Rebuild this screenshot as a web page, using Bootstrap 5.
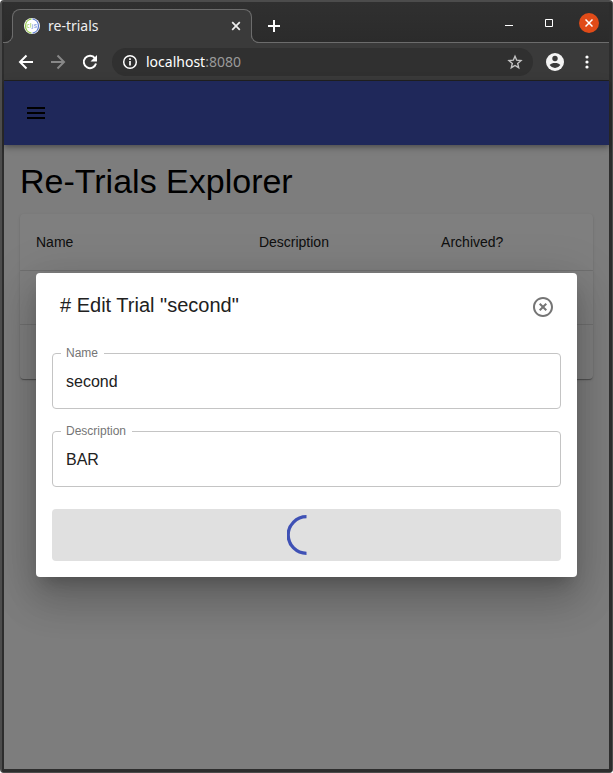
<!DOCTYPE html>
<html lang="en">
<head>
<meta charset="utf-8">
<meta name="viewport" content="width=device-width, initial-scale=1">
<title>re-trials</title>
<link href="https://cdn.jsdelivr.net/npm/bootstrap@5.3.0/dist/css/bootstrap.min.css" rel="stylesheet">
<style>
  :root { --chrome: #3a3a3a; --chrome-line: #6c6c6c; --primary: #3f51b5; }
  body { font-family: "Liberation Sans", Arial, sans-serif; color: #212121; background: #fff; }
  svg { display: block; flex: none; }
  .win-frame { border: 2px solid #4c4c4c; border-right: 1px solid #4c4c4c; border-bottom: 1px solid #4c4c4c; border-radius: 4px; background: #2d2d2d; overflow: hidden; }
  .win-inner { border: solid #2d2d2d; border-width: 0 3px 3px 2px; }
  .ui-text { font-family: "Noto Sans", "Open Sans", sans-serif; font-size: 14px; line-height: 20px; }
  .icon-btn { border: 0; padding: 0; background: none; color: inherit; display: flex; align-items: center; justify-content: center; }

  .tab-strip { height: 41px; background: linear-gradient(#303030, #2b2b2b); border-bottom: 1px solid var(--chrome-line); color: #fff; }
  .page-tab { width: 240px; height: 34px; margin: 0 0 -1px 8px; padding: 0 10px 2px 11px; background: var(--chrome); border: 1px solid var(--chrome-line); border-bottom: 0; border-radius: 8px 8px 0 0; color: #eee; }
  .page-tab::before, .page-tab::after { content: ""; position: absolute; bottom: 0; width: 10px; height: 10px; border-bottom: 1px solid var(--chrome-line); box-shadow: 4px 4px 0 var(--chrome); clip-path: inset(0); }
  .page-tab::before { left: -10px; border-right: 1px solid var(--chrome-line); border-bottom-right-radius: 8px; }
  .page-tab::after { right: -10px; border-left: 1px solid var(--chrome-line); border-bottom-left-radius: 8px; box-shadow: -4px 4px 0 var(--chrome); }
  .new-tab { margin: 0 0 10px 16px; }
  .win-buttons { margin: 0 10px 9px auto; }
  .win-close { width: 20px; height: 20px; margin-left: 10px; border-radius: 50%; background: #e04b18; }

  .tool-row { height: 38px; background: var(--chrome); border-bottom: 1px solid #222; color: #fff; padding: 0 16px 0 14px; }
  .omnibox { height: 28px; margin: 0 8px 0 14px; border-radius: 14px; background: #303030; padding: 0 10px; }
  .omnibox span { color: #9a9a9a; }

  .page-view { background: #fafafa; }
  .app-bar { height: 64px; padding: 0 20px; background: var(--primary); box-shadow: 0 2px 4px -1px rgba(0,0,0,.2), 0 4px 5px rgba(0,0,0,.14), 0 1px 10px rgba(0,0,0,.12); color: #000; }
  .page-title { font-size: 34px; line-height: 42px; color: #000; padding-top: 15px; margin-bottom: 12px; font-weight: 400; }
  .paper { background: #fff; border-radius: 4px; box-shadow: 0 2px 1px -1px rgba(0,0,0,.2), 0 1px 1px rgba(0,0,0,.14), 0 1px 3px rgba(0,0,0,.12); }
  .trials { table-layout: fixed; font-size: 14px; line-height: 24px; }
  .trials th { font-weight: 400; padding: 16px; border-bottom: 1px solid #e0e0e0; width: 38.9%; }
  .trials th:nth-child(2) { width: 31.8%; }
  .trials th:nth-child(3) { width: 29.3%; }
  .trials td { height: 54px; border-bottom: 1px solid #e0e0e0; }
  .trials tr:last-child td { border-bottom: 0; }

  .scrim { background: rgba(0,0,0,.5); padding: 32px; }
  .dialog-box { background: #fff; border-radius: 4px; box-shadow: 0 11px 15px -7px rgba(0,0,0,.2), 0 24px 38px 3px rgba(0,0,0,.14), 0 9px 46px 8px rgba(0,0,0,.12); }
  .dialog-head { padding: 10px 10px 0 24px; }
  .dialog-head h2 { font-size: 20px; line-height: 32px; padding-top: 6px; font-weight: 400; }
  .dialog-head .icon-btn { width: 48px; height: 48px; color: #757575; }
  .dialog-form { display: grid; gap: 22px; padding: 22px 16px 16px; }
  .field label { position: absolute; top: -8px; left: 9px; padding: 0 6px 0 5px; background: #fff; color: #757575; font-size: 12px; line-height: 16px; }
  .field input { height: 56px; padding: 2px 13px 0; border: 1px solid #c4c4c4; border-radius: 4px; font-size: 16px; line-height: 24px; color: #212121; background: #fff; }
  .save-btn, .save-btn:disabled { height: 52px; padding: 0; background: #e0e0e0; border: 0; border-radius: 4px; opacity: 1; color: var(--primary); }
</style>
<script src="https://cdn.jsdelivr.net/npm/bootstrap@5.3.0/dist/js/bootstrap.bundle.min.js"></script>
</head>
<body>
<div class="win-frame d-flex flex-column min-vh-100">
<div class="win-inner d-flex flex-column flex-grow-1">

  <header>
    <div class="tab-strip d-flex align-items-end">
      <div class="page-tab ui-text position-relative d-flex align-items-center">
        <svg width="16" height="16" viewBox="0 0 16 16" aria-hidden="true">
          <circle cx="8" cy="8" r="8" fill="#fff"/>
          <path d="M7.500.9A7.200 7.200 0 0 0 7.500 15.100" fill="none" stroke="#96ca4b" stroke-width="1.300"/>
          <path d="M8.500.9A7.200 7.200 0 0 1 8.500 15.100" fill="none" stroke="#5f7fd0" stroke-width="1.300"/>
          <path d="M5.300 6.500H3.700Q3 6.500 3 8T3.700 9.500H5.300M6.700 5V9.700" fill="none" stroke="#b9dc88"/>
          <path d="M8.700 6.200V10.500H7.500M12.700 6.500H10.600V8H12.400V9.600H10.200" fill="none" stroke="#9fb3e3"/>
        </svg>
        <span class="ms-2 flex-grow-1">re-trials</span>
        <button class="icon-btn" type="button" aria-label="Close tab">
          <svg width="10" height="10" viewBox="0 0 10 10" stroke="currentColor" stroke-width="1.700"><path d="M1.200 1.200l7.600 7.600M8.800 1.200L1.200 8.800"/></svg>
        </button>
      </div>
      <button class="icon-btn new-tab" type="button" aria-label="New tab">
        <svg width="12" height="12" viewBox="0 0 12 12" stroke="currentColor" stroke-width="2"><path d="M6 0v12M0 6h12"/></svg>
      </button>
      <div class="win-buttons d-flex align-items-center">
        <button class="icon-btn" type="button" aria-label="Minimize">
          <svg width="40" height="20" viewBox="0 0 40 20"><path d="M16 12.500h8" stroke="#fff"/></svg>
        </button>
        <button class="icon-btn" type="button" aria-label="Maximize">
          <svg width="40" height="20" viewBox="0 0 40 20"><path d="M16.500 6.500h7v7h-7z" fill="none" stroke="#fff"/></svg>
        </button>
        <button class="icon-btn win-close" type="button" aria-label="Close window">
          <svg width="8" height="8" viewBox="0 0 8 8" stroke="#fff" stroke-width="1.500"><path d="M.5.5l7 7M7.500.5l-7 7"/></svg>
        </button>
      </div>
    </div>

    <div class="tool-row d-flex align-items-center">
      <button class="icon-btn" type="button" aria-label="Back">
        <svg width="16" height="16" viewBox="0 0 16 16" fill="none" stroke="currentColor" stroke-width="2"><path d="M15 8H2.500M8.500 1.500L2 8l6.500 6.500"/></svg>
      </button>
      <button class="icon-btn ms-3" type="button" aria-label="Forward">
        <svg width="16" height="16" viewBox="0 0 16 16" fill="none" stroke="#888" stroke-width="2"><path d="M1 8h12.500M7.500 1.500L14 8l-6.500 6.500"/></svg>
      </button>
      <button class="icon-btn ms-3" type="button" aria-label="Reload">
        <svg width="16" height="16" viewBox="0 0 16 16"><path d="M13 4.300A6.200 6.200 0 1 0 14 9.600" fill="none" stroke="currentColor" stroke-width="2"/><path d="M15 1v6.500H8.500z" fill="currentColor"/></svg>
      </button>
      <div class="omnibox ui-text d-flex align-items-center flex-grow-1">
        <svg width="16" height="16" viewBox="0 0 16 16"><circle cx="8" cy="8" r="6.300" fill="none" stroke="currentColor" stroke-width="1.500"/><path d="M8 7v4.500M8 4.300v1.700" stroke="currentColor" stroke-width="1.700"/></svg>
        <div class="ms-2 flex-grow-1">localhost<span>:8080</span></div>
        <button class="icon-btn" type="button" aria-label="Bookmark this page">
          <svg width="16" height="16" viewBox="0 0 16 16" fill="none" stroke="#c4c4c4" stroke-width="1.400"><path d="M8 2.200l1.700 4 4.300.4-3.300 2.900 1 4.200L8 11.500l-3.700 2.200 1-4.200L2 6.600l4.300-.4z"/></svg>
        </button>
      </div>
      <button class="icon-btn ms-1" type="button" aria-label="Profile">
        <svg width="20" height="20" viewBox="0 0 20 20"><circle cx="10" cy="10" r="9" fill="#f4f4f4"/><circle cx="10" cy="6.500" r="2.700" fill="#3a3a3a"/><path d="M4.600 13.100C5.500 11.500 8 10.900 10 10.900s4.500.6 5.400 2.200A6.400 6.400 0 0 1 10 15.900a6.400 6.400 0 0 1-5.400-2.800z" fill="#3a3a3a"/></svg>
      </button>
      <button class="icon-btn ms-3" type="button" aria-label="Browser menu">
        <svg width="12" height="16" viewBox="0 0 12 16" fill="currentColor"><circle cx="6" cy="3" r="1.600"/><circle cx="6" cy="8" r="1.600"/><circle cx="6" cy="13" r="1.600"/></svg>
      </button>
    </div>
  </header>

  <div class="page-view position-relative flex-grow-1">
    <nav class="app-bar d-flex align-items-center">
      <button class="icon-btn" type="button" aria-label="Open menu">
        <svg width="24" height="24" viewBox="0 0 24 24" fill="currentColor"><path d="M3 18h18v-2H3v2zm0-5h18v-2H3v2zm0-7v2h18V6H3z"/></svg>
      </button>
    </nav>
    <main class="px-3">
      <h1 class="page-title">Re-Trials Explorer</h1>
      <div class="paper">
        <table class="trials w-100">
          <thead><tr><th scope="col">Name</th><th scope="col">Description</th><th scope="col">Archived?</th></tr></thead>
          <tbody>
            <tr><td></td><td></td><td></td></tr>
            <tr><td></td><td></td><td></td></tr>
          </tbody>
        </table>
      </div>
    </main>

    <div class="scrim position-absolute top-0 bottom-0 start-0 end-0 d-flex align-items-center overflow-hidden">
      <div class="dialog-box w-100" role="dialog" aria-labelledby="dialog-title">
        <div class="dialog-head d-flex justify-content-between align-items-start">
          <h2 class="mb-0" id="dialog-title"># Edit Trial "second"</h2>
          <button class="icon-btn" type="button" aria-label="Close">
            <svg width="24" height="24" viewBox="0 0 24 24" fill="currentColor"><path d="M14.590 8L12 10.590 9.410 8 8 9.410 10.590 12 8 14.590 9.410 16 12 13.410 14.590 16 16 14.590 13.410 12 16 9.410 14.590 8zM12 2C6.470 2 2 6.470 2 12s4.470 10 10 10 10-4.470 10-10S17.530 2 12 2zm0 18c-4.410 0-8-3.590-8-8s3.590-8 8-8 8 3.590 8 8-3.590 8-8 8z"/></svg>
          </button>
        </div>
        <form class="dialog-form">
          <div class="field position-relative">
            <input class="w-100 d-block" type="text" id="trial-name" value="second">
            <label for="trial-name">Name</label>
          </div>
          <div class="field position-relative">
            <input class="w-100 d-block" type="text" id="trial-description" value="BAR">
            <label for="trial-description">Description</label>
          </div>
          <button class="btn save-btn w-100 d-flex align-items-center justify-content-center" type="submit" disabled aria-label="Saving">
            <svg width="40" height="40" viewBox="0 0 40 40" fill="none" stroke="currentColor" stroke-width="3.300"><path d="M19.500 1.700A18.300 18.300 0 0 0 19.500 38.300"/></svg>
          </button>
        </form>
      </div>
    </div>
  </div>

</div>
</div>
</body>
</html>
